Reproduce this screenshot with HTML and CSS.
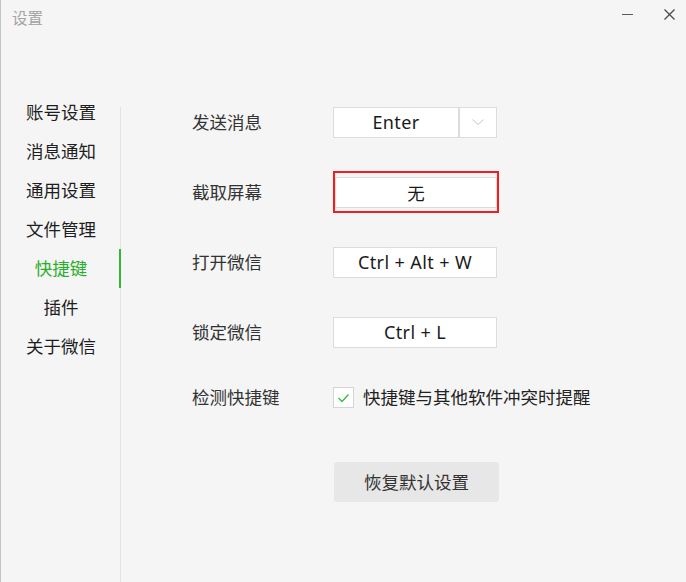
FILE: index.html
```html
<!DOCTYPE html>
<html lang="zh-CN">
<head>
<meta charset="utf-8">
<title>设置</title>
<link rel="stylesheet" href="styles.css">
</head>
<body>
<div class="window">
  <header class="titlebar">
    <span class="title">设置</span>
    <div class="controls">
      <span class="ctl">
        <svg width="11" height="11" viewBox="0 0 11 11"><line x1="0" y1="5.5" x2="11" y2="5.5" stroke="#5a5a5a" stroke-width="1"/></svg>
      </span>
      <span class="ctl">
        <svg width="11" height="11" viewBox="0 0 11 11"><path d="M0.5 0.5 L10.5 10.5 M10.5 0.5 L0.5 10.5" stroke="#4a4a4a" stroke-width="1.3" fill="none"/></svg>
      </span>
    </div>
  </header>
  <div class="main">
    <nav class="nav">
      <div class="nav-item">账号设置</div>
      <div class="nav-item">消息通知</div>
      <div class="nav-item">通用设置</div>
      <div class="nav-item">文件管理</div>
      <div class="nav-item active">快捷键</div>
      <div class="nav-item">插件</div>
      <div class="nav-item">关于微信</div>
    </nav>
    <section class="content">
      <div class="row">
        <div class="label">发送消息</div>
        <div class="combo">
          <div class="key key-main">Enter</div>
          <div class="key key-arrow">
            <svg width="12" height="6" viewBox="0 0 12 6"><path d="M0.5 0.5 L6 5.5 L11.5 0.5" stroke="#c6c6c6" stroke-width="1" fill="none"/></svg>
          </div>
        </div>
      </div>
      <div class="row">
        <div class="label">截取屏幕</div>
        <div class="focus-ring">
          <div class="key key-focused">无</div>
        </div>
      </div>
      <div class="row">
        <div class="label">打开微信</div>
        <div class="key key-wide">Ctrl + Alt + W</div>
      </div>
      <div class="row">
        <div class="label">锁定微信</div>
        <div class="key key-wide">Ctrl + L</div>
      </div>
      <div class="row row-check">
        <div class="label">检测快捷键</div>
        <label class="check">
          <span class="checkbox">
            <svg width="19" height="19" viewBox="0 0 19 19"><polyline points="4.5,10 8,13.5 14.5,6.5" stroke="#3dbb3d" stroke-width="1.4" fill="none"/></svg>
          </span>
          <span class="check-text">快捷键与其他软件冲突时提醒</span>
        </label>
      </div>
      <div class="btn-row">
        <button class="btn">恢复默认设置</button>
      </div>
    </section>
  </div>
</div>
</body>
</html>
```
FILE: styles.css
```css
* { box-sizing: border-box; }
html, body {
  margin: 0;
  padding: 0;
  background: #f5f5f5;
}
body {
  font-family: "Noto Sans CJK SC", "Noto Sans", sans-serif;
  color: #222;
}
.window {
  width: 686px;
  height: 582px;
  background: #f5f5f5;
  border-left: 1px solid #c4c4c4;
  display: flex;
  flex-direction: column;
  overflow: hidden;
}
.titlebar {
  height: 93px;
  flex: none;
  display: flex;
  justify-content: space-between;
  align-items: flex-start;
}
.title {
  margin-top: 6px;
  margin-left: 11px;
  font-size: 15.5px;
  line-height: 22px;
  color: #a3a3a3;
}
.controls {
  display: flex;
  gap: 31px;
  padding-top: 9px;
  padding-right: 11px;
}
.ctl {
  display: block;
  width: 11px;
  height: 11px;
}
.ctl svg { display: block; }
.main {
  flex: 1;
  display: flex;
}
.nav {
  width: 120px;
  flex: none;
  background: linear-gradient(#e2e2e2, #e2e2e2) right 14px / 1px calc(100% - 14px) no-repeat;
}
.nav-item {
  height: 39px;
  line-height: 37px;
  padding-bottom: 2px;
  text-align: center;
  font-size: 17.5px;
  color: #1e1e1e;
}
.nav-item.active {
  color: #2aae2a;
  box-shadow: inset -2px 0 0 #33b833;
}
.content {
  flex: 1;
  padding-left: 71px;
  padding-top: 9px;
  display: flex;
  flex-direction: column;
  gap: 30px;
}
.row {
  height: 40px;
  display: flex;
  align-items: center;
}
.row-check { margin-top: -5px; }
.label {
  width: 141px;
  flex: none;
  font-size: 17.5px;
  color: #333;
  padding-bottom: 2px;
}
.combo {
  display: flex;
}
.key {
  height: 31px;
  background: #fff;
  border: 1px solid #dcdcdc;
  display: flex;
  align-items: center;
  justify-content: center;
  font-family: "Noto Sans", "Noto Sans CJK SC", sans-serif;
  font-size: 18px;
  letter-spacing: 0.4px;
  color: #1a1a1a;
  padding-bottom: 1px;
}
.key-main { width: 126px; }
.key-arrow { width: 38px; padding-bottom: 0; }
.key-arrow svg { display: block; }
.key-wide { width: 164px; }
.focus-ring {
  width: 166px;
  height: 42px;
  border: 2px solid #f01e1e;
  padding: 4px 0 3px 0;
  display: flex;
}
.key-focused {
  width: 162px;
  font-family: "Noto Sans CJK SC", sans-serif;
  font-size: 17.5px;
  letter-spacing: 0;
}
.check {
  display: flex;
  align-items: center;
}
.checkbox {
  width: 21px;
  height: 21px;
  border: 1px solid #d4d4d4;
  background: #fff;
  display: flex;
  align-items: center;
  justify-content: center;
  margin-right: 9px;
}
.checkbox svg { display: block; }
.check-text {
  font-size: 17.5px;
  color: #222;
  padding-bottom: 2px;
}
.btn-row {
  margin-top: 15px;
  padding-left: 142px;
}
.btn {
  width: 165px;
  height: 40px;
  border: none;
  border-radius: 3px;
  background: #e7e7e7;
  font-family: "Noto Sans CJK SC", "Noto Sans", sans-serif;
  font-size: 17.5px;
  color: #333;
  padding: 0 0 2px 0;
}
```
